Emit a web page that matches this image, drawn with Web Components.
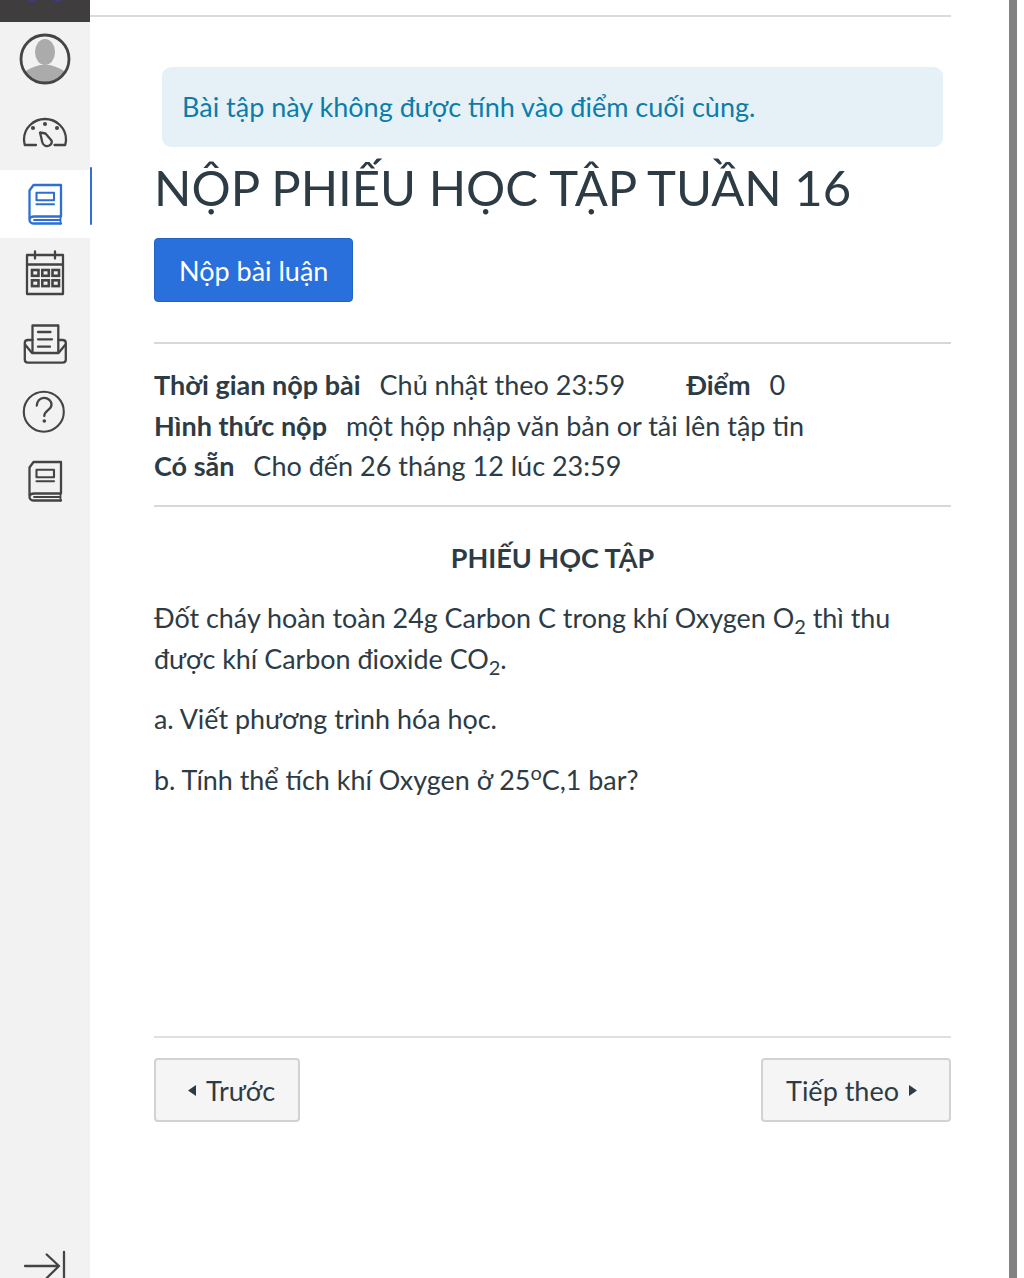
<!DOCTYPE html>
<html lang="vi"><head><meta charset="utf-8"><style>
html,body{margin:0;padding:0;height:1278px;overflow:hidden;background:#fff}
body{font-family:Lato,"Noto Sans",sans-serif;color:#2d3b45}
</style></head><body>
<app-shell>
<side-nav slot="nav"></side-nav>
<info-alert>Bài tập này không được tính vào điểm cuối cùng.</info-alert>
<page-title>NỘP PHIẾU HỌC TẬP TUẦN 16</page-title>
<action-button variant="primary">Nộp bài luận</action-button>
<meta-block></meta-block>
<assignment-body></assignment-body>
<pager-bar></pager-bar>
</app-shell>
<script>
function el(name,html){customElements.define(name,class extends HTMLElement{constructor(){super();this.attachShadow({mode:'open'}).innerHTML=html}})}
const ic=(body,vy,w=50,h=50)=>`<svg width="${w}" height="${h}" viewBox="20 ${vy} ${w} ${h}" fill="none" stroke="currentColor" stroke-width="2.300" stroke-linejoin="round" stroke-linecap="round">${body}</svg>`;
const book=`<path d="M29.500 219V190.500L33.500 185H61V216.500H34.500C31 216.500 29.500 218 29.500 220C29.500 222 31.500 223.500 34 223.500H61"/><path d="M34 220H60" stroke-width="1.800"/><path d="M60.500 216.500V223.500" stroke-width="1.800"/><rect x="36.500" y="192.700" width="17.500" height="7.500" stroke-width="2.100"/><path d="M36.500 204.200H54" stroke-width="2.100"/>`;
el('app-shell',`<style>
:host{display:flex;width:1024px;height:1278px;position:relative;overflow:hidden}
.nav{flex:0 0 90px;display:block}
main{flex:0 0 797px;margin-left:64px;display:flex;flex-direction:column;align-items:flex-start;padding-top:15px;box-sizing:border-box;height:1278px}
.top{margin-left:-64px;width:861px;height:2px;background:#dadadc;flex:none}
.bar{flex:0 0 8px;margin-left:58px;background:#828282;height:1278px}
.pad{flex:1;background:#fff}
</style><div class="nav"><slot name="nav"></slot></div><main><div class="top"></div><slot></slot></main><div class="bar"></div><div class="pad"></div>`);
el('side-nav',`<style>
:host{display:flex;flex-direction:column;width:90px;height:1278px;background:#f2f2f2;color:#444;position:relative}
.head{height:22px;background:#3f3d3e;flex:none;overflow:hidden}
.head svg{display:block}
.item{display:flex;justify-content:center;align-items:center;flex:none}
.active{background:#fff;color:#2d6fd2}
.mark{position:absolute;left:90px;top:167px;width:2px;height:58px;background:#2d6fd2;border-radius:1px}
.grow{flex:1}
.toggle{height:38px;overflow:hidden;flex:none;display:flex;justify-content:center}
</style>
<div class="head"><svg width="90" height="3" viewBox="0 0 90 3"><ellipse cx="32" cy="0" rx="4" ry="2" fill="#3a3a86"/><ellipse cx="58" cy="0" rx="4" ry="2" fill="#3a3a86"/></svg></div>
<div class="item" style="height:74px"><svg width="52" height="52" viewBox="0 0 52 52"><defs><clipPath id="c"><circle cx="26" cy="26" r="23.500"/></clipPath></defs><circle cx="26" cy="26" r="24" fill="#f2f2f2"/><g clip-path="url(#c)" fill="#ababab"><ellipse cx="26" cy="19" rx="10" ry="13"/><path d="M3 52V42c4-6 12-8 18-10h10c6 2 14 4 18 10v10z"/></g><circle cx="26" cy="26" r="24" fill="none" stroke="#454545" stroke-width="2.800"/></svg></div>
<div class="item" style="height:74px">${ic(`<path d="M36 145H24.800C24.300 143 24 141.500 24 139.500A21 20.500 0 0 1 66 139.500C66 141.500 65.700 143 65.200 145H54.500"/><path d="M40 132.500L45.500 133.500L51.500 140.500C52.800 144 49 147 45.500 145.800C42.800 144.800 42 142 41.800 140z"/><circle cx="45" cy="124" r=".9" fill="currentColor"/><circle cx="33" cy="128" r=".9" fill="currentColor"/><circle cx="57" cy="128" r=".9" fill="currentColor"/>`,108)}</div>
<div class="item active" style="height:68px">${ic(book,179)}</div>
<div class="item" style="height:72px">${ic(`<rect x="27" y="255" width="36" height="39"/><path d="M27 264.500H63M35 251.500V258.500M55 251.500V258.500"/><g stroke-width="2.600" stroke-linejoin="miter"><rect x="32" y="270" width="6.500" height="5.800"/><rect x="42.300" y="270" width="6.500" height="5.800"/><rect x="52.500" y="270" width="6.500" height="5.800"/><rect x="32" y="280.300" width="6.500" height="5.800"/><rect x="42.300" y="280.300" width="6.500" height="5.800"/><rect x="52.500" y="280.300" width="6.500" height="5.800"/></g>`,249)}</div>
<div class="item" style="height:66px">${ic(`<path d="M32.500 352.500V325.500H58.300V352.500"/><path d="M32.500 340H28C26 340 24.800 341.200 24.800 343V359.500C24.800 361.500 26 362.700 28 362.700H62.500C64.500 362.700 65.800 361.500 65.800 359.500V343C65.800 341.200 64.500 340 62.500 340H58.300"/><path d="M25 344.500L32 353H58.500L65.500 344.500"/><path d="M38 332H50.500M38 339.300H52M38 346.700H50"/>`,318)}</div>
<div class="item" style="height:68px">${ic(`<circle cx="43.800" cy="411.700" r="20" stroke-width="2.100"/><path d="M36.800 405.500C37 401 40 397.800 44 397.800C48.300 397.800 51.500 401 51.500 404.800C51.500 410 44.300 410.500 44.300 416"/><circle cx="44.300" cy="421" r="1.800" fill="currentColor" stroke="none"/>`,385)}</div>
<div class="item" style="height:68px">${ic(book,176)}</div>
<div class="grow"></div>
<div class="toggle">${ic(`<path d="M25 1266H59M46.700 1254.500L59 1266L46.700 1278M64 1252V1278"/>`,1240,50,38)}</div>
<div class="mark"></div>`);
el('info-alert',`<style>
:host{display:block;box-sizing:border-box;margin:50px 0 0 8px;width:781px;height:80px;padding:0 20px;border-radius:9px;background:#e6f1f7;color:#0b7dab;font-size:27px;line-height:80px;flex:none}
</style><slot></slot>`);
el('page-title',`<style>
:host{display:block;font-size:49px;line-height:60px;height:60px;margin-top:10px;white-space:nowrap;color:#2d3b45;flex:none}
</style><slot></slot>`);
el('action-button',`<style>
:host{display:inline-flex;align-items:center;justify-content:center;box-sizing:border-box;height:64px;padding:0 25px;border-radius:4px;font-size:27px;flex:none;background:#f5f5f6;color:#2d3b45;border:2px solid #d0d3d6;white-space:nowrap;gap:10px}
:host([variant=primary]){margin-top:21px;padding:0 24px;background:#2a70dc;color:#fff;border:1px solid #2264c6}
:host([variant=prev]){padding:0 23px 0 32px}
:host([variant=next]){padding:0 32px 0 23px}
</style><slot></slot>`);
el('meta-block',`<style>
:host{display:block;box-sizing:border-box;width:797px;height:165px;margin-top:40px;border-top:2px solid #d8d8dc;border-bottom:2px solid #d8d8dc;padding-top:21px;font-size:27px;line-height:40.500px;flex:none}
b{font-weight:700;margin-right:12px}
.row{white-space:nowrap}
.gap{display:inline-block;width:61px}
</style><div class="row"><b>Thời gian nộp bài</b> Chủ nhật theo 23:59<span class="gap"></span><b>Điểm</b> 0</div><div class="row"><b>Hình thức nộp</b> một hộp nhập văn bản or tải lên tập tin</div><div class="row"><b>Có sẵn</b> Cho đến 26 tháng 12 lúc 23:59</div>`);
el('assignment-body',`<style>
:host{display:block;width:797px;height:529px;box-sizing:border-box;font-size:26.900px;line-height:40.500px;flex:none}
h3{margin:31px 0 0;font-size:27px;line-height:40px;font-weight:700;text-align:center}
p{margin:20px 0 0}
sub,sup{font-size:20px;line-height:0}
</style><h3>PHIẾU HỌC TẬP</h3><p>Đốt cháy hoàn toàn 24g Carbon C trong khí Oxygen O<sub>2</sub> thì thu được khí Carbon đioxide CO<sub>2</sub>.</p><p>a. Viết phương trình hóa học.</p><p>b. Tính thể tích khí Oxygen ở 25<sup>o</sup>C,1 bar?</p>`);
el('pager-bar',`<style>
:host{display:flex;justify-content:space-between;box-sizing:border-box;width:797px;border-top:2px solid #e0e0e3;padding-top:20px;flex:none}
svg{display:block;flex:none}
</style><action-button variant="prev"><svg width="8" height="11" viewBox="0 0 8 11"><path d="M8 0v11L0 5.500z" fill="#2d3b45"/></svg>Trước</action-button><action-button variant="next">Tiếp theo<svg width="8" height="11" viewBox="0 0 8 11"><path d="M0 0v11L8 5.500z" fill="#2d3b45"/></svg></action-button>`);
</script>
</body></html>
